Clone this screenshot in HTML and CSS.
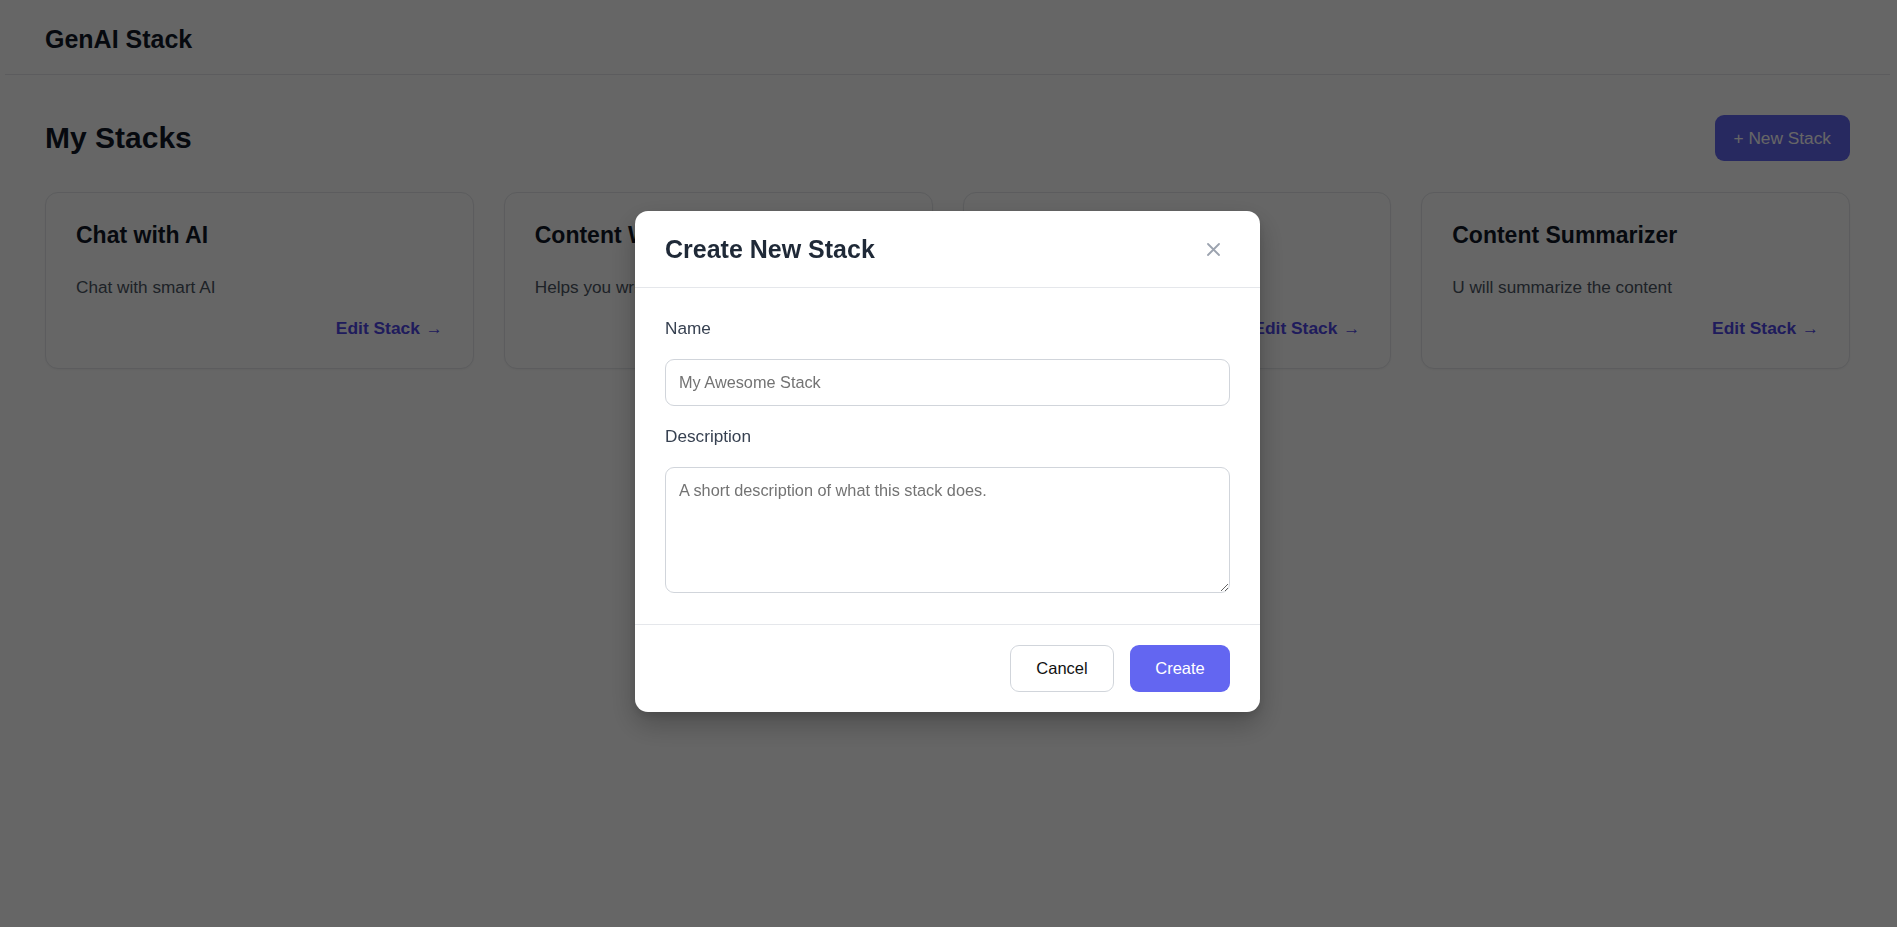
FILE: index.html
```html
<!DOCTYPE html>
<html lang="en">
<head>
<meta charset="utf-8">
<title>GenAI Stack</title>
<link rel="stylesheet" href="styles.css">
</head>
<body>
<div class="app">
  <header class="topbar">
    <div class="topbar-inner">
      <div class="brand">GenAI Stack</div>
    </div>
  </header>
  <main class="main">
    <div class="page-head">
      <h1 class="page-title">My Stacks</h1>
      <button class="btn-new">+ New Stack</button>
    </div>
    <div class="cards">
      <div class="card">
        <h2 class="card-title">Chat with AI</h2>
        <p class="card-desc">Chat with smart AI</p>
        <div class="card-foot"><a class="card-link">Edit Stack <span class="arrow">→</span></a></div>
      </div>
      <div class="card">
        <h2 class="card-title">Content Writer</h2>
        <p class="card-desc">Helps you write content</p>
        <div class="card-foot"><a class="card-link">Edit Stack <span class="arrow">→</span></a></div>
      </div>
      <div class="card">
        <h2 class="card-title">Resume Helper</h2>
        <p class="card-desc">Reviews your resume</p>
        <div class="card-foot"><a class="card-link">Edit Stack <span class="arrow">→</span></a></div>
      </div>
      <div class="card">
        <h2 class="card-title">Content Summarizer</h2>
        <p class="card-desc">U will summarize the content</p>
        <div class="card-foot"><a class="card-link">Edit Stack <span class="arrow">→</span></a></div>
      </div>
    </div>
  </main>
</div>

<div class="overlay">
  <div class="modal">
    <div class="modal-head">
      <h3 class="modal-title">Create New Stack</h3>
      <button class="close-btn" aria-label="Close">
        <svg width="13" height="13" viewBox="0 0 13 13"><path d="M1 1 L12 12 M12 1 L1 12" stroke="#9ca3af" stroke-width="1.8" stroke-linecap="round" fill="none"/></svg>
      </button>
    </div>
    <div class="modal-body">
      <div class="field">
        <label class="field-label">Name</label>
        <input class="field-input" type="text" placeholder="My Awesome Stack">
      </div>
      <div class="field">
        <label class="field-label">Description</label>
        <textarea class="field-textarea" placeholder="A short description of what this stack does."></textarea>
      </div>
    </div>
    <div class="modal-foot">
      <button class="btn-cancel">Cancel</button>
      <button class="btn-create">Create</button>
    </div>
  </div>
</div>
</body>
</html>
```
FILE: styles.css
```css
* { box-sizing: border-box; }
html, body { margin: 0; padding: 0; }
body {
  font-family: "Liberation Sans", Arial, sans-serif;
  background: #ffffff;
  color: #111827;
  width: 1897px;
  height: 927px;
  overflow: hidden;
}
.topbar { height: 75px; }
.topbar-inner {
  margin: 0 7px 0 5px;
  padding: 24px 0 20px 40px;
  border-bottom: 1px solid #e5e7eb;
}
.brand {
  font-size: 25px;
  line-height: 30px;
  font-weight: 700;
  color: #111827;
}
.main { padding: 40px 47px 0 45px; }
.page-head {
  display: flex;
  align-items: center;
  justify-content: space-between;
}
.page-title {
  margin: 0;
  font-size: 30px;
  line-height: 36px;
  font-weight: 700;
  color: #111827;
}
.btn-new {
  height: 46px;
  padding: 0 19px;
  border: none;
  border-radius: 9px;
  background: #6366f1;
  color: #ffffff;
  font-family: inherit;
  font-size: 17.3px;
}
.cards {
  margin-top: 31px;
  display: grid;
  grid-template-columns: repeat(4, 1fr);
  gap: 30px;
}
.card {
  background: #ffffff;
  border: 1px solid #e5e7eb;
  border-radius: 13px;
  padding: 28px 30px 27px 30px;
  box-shadow: 0 1px 2px rgba(0,0,0,0.04);
}
.card-title {
  margin: 0;
  font-size: 23px;
  line-height: 28px;
  font-weight: 700;
  color: #111827;
}
.card-desc {
  margin: 26px 0 0;
  font-size: 17.2px;
  line-height: 25px;
  color: #4b5563;
}
.card-foot {
  margin-top: 16px;
  display: flex;
  justify-content: flex-end;
}
.card-link {
  font-size: 17.4px;
  line-height: 25px;
  font-weight: 700;
  color: #4f46e5;
}
.arrow { font-weight: 400; font-size: 17px; margin-left: 1px; }

.overlay {
  position: fixed;
  inset: 0;
  background: rgba(0,0,0,0.6);
  display: flex;
  align-items: center;
  justify-content: center;
  padding-bottom: 4px;
  padding-right: 2px;
}
.modal {
  width: 625px;
  background: #ffffff;
  border-radius: 13px;
  box-shadow: 0 12px 28px rgba(0,0,0,0.25), 0 4px 8px rgba(0,0,0,0.1);
  overflow: hidden;
}
.modal-head {
  display: flex;
  align-items: center;
  justify-content: space-between;
  padding: 23px 30px;
  border-bottom: 1px solid #e5e7eb;
}
.modal-title {
  margin: 0;
  font-size: 25px;
  line-height: 30px;
  font-weight: 700;
  color: #1f2937;
}
.close-btn {
  display: flex;
  background: none;
  border: none;
  padding: 0;
  margin-right: 10px;
}
.modal-body { padding: 28px 30px 31px; }
.field + .field { margin-top: 18px; }
.field-label {
  display: block;
  font-size: 17.2px;
  line-height: 25px;
  color: #374151;
  margin-bottom: 18px;
}
.field-input, .field-textarea {
  display: block;
  width: 100%;
  border: 1px solid #d1d5db;
  border-radius: 9px;
  font-family: inherit;
  font-size: 16.3px;
  color: #111827;
  background: #ffffff;
}
.field-input {
  height: 47px;
  padding: 0 13px;
}
.field-textarea {
  height: 126px;
  padding: 10px 13px;
  line-height: 24px;
  resize: vertical;
}
.field-input::placeholder, .field-textarea::placeholder { color: #737373; }
.modal-foot {
  display: flex;
  justify-content: flex-end;
  gap: 16px;
  padding: 20px 30px;
  border-top: 1px solid #e5e7eb;
}
.btn-cancel, .btn-create {
  height: 47px;
  border-radius: 9px;
  font-family: inherit;
  font-size: 16.5px;
  padding: 0 25px;
}
.btn-cancel {
  background: #ffffff;
  border: 1px solid #d1d5db;
  color: #111111;
  width: 104px;
}
.btn-create {
  background: #6366f1;
  border: none;
  color: #ffffff;
  width: 100px;
}
```
